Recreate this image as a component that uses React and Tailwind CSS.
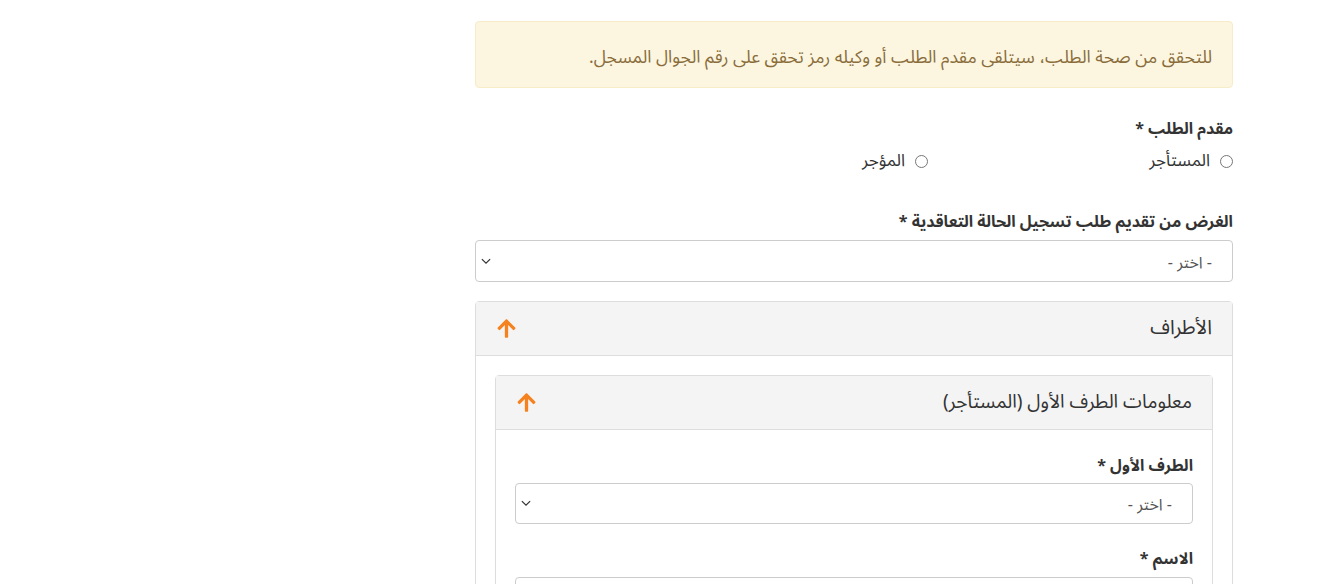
import React from "react";

function ArrowUp() {
  return (
    <svg width="21" height="21" viewBox="0 0 448 512" className="fill-[#f5821f]">
      <path d="M34.9 289.5l-22.2-22.2c-9.4-9.4-9.4-24.6 0-33.9L207 39c9.4-9.4 24.6-9.4 33.9 0l194.3 194.3c9.4 9.4 9.4 24.6 0 33.9L413 289.4c-9.5 9.5-25 9.3-34.3-.4L264 168.6V456c0 13.3-10.7 24-24 24h-32c-13.3 0-24-10.7-24-24V168.6L69.2 289.1c-9.3 9.8-24.8 10-34.3.4z" />
    </svg>
  );
}

function Chevron() {
  return (
    <svg width="12" height="12" viewBox="0 0 16 16" fill="none" stroke="#333" strokeWidth="1.6">
      <path d="M2.5 5.5 L8 11 L13.5 5.5" />
    </svg>
  );
}

function Select({ h = "h-[42px]" }) {
  return (
    <div className={`flex items-center justify-between ${h} rounded border border-[#cccccc] bg-white pr-5 pl-1`}>
      <span className="text-[16px] text-[#555] pt-1">- اختر -</span>
      <Chevron />
    </div>
  );
}

function Radio({ label }) {
  return (
    <div className="flex items-center gap-2.5">
      <span className="w-[13px] h-[13px] rounded-full border border-[#767676] bg-white" />
      <span className="text-[17px] text-[#333]">{label}</span>
    </div>
  );
}

export default function App() {
  return (
    <div
      dir="rtl"
      className="min-h-[584px] bg-white"
      style={{ fontFamily: '"Noto Sans Arabic", "DejaVu Sans", sans-serif' }}
    >
      <div className="mr-[90px] w-[758px] pt-[21px]">
        <div className="rounded border border-[#f7ecc8] bg-[#fcf6e1] px-5 pt-[8px] h-[67px] flex items-center">
          <p className="text-[17.5px] text-[#8a6d3b]">
            للتحقق من صحة الطلب، سيتلقى مقدم الطلب أو وكيله رمز تحقق على رقم الجوال المسجل.
          </p>
        </div>

        <div className="mt-[30px]">
          <div className="text-[16px] font-bold text-[#333] leading-[22px]">مقدم الطلب *</div>
          <div className="flex mt-[9px]">
            <div className="w-[305px]"><Radio label="المستأجر" /></div>
            <div><Radio label="المؤجر" /></div>
          </div>
        </div>

        <div className="mt-[36px]">
          <div className="text-[16px] font-bold text-[#333] leading-[22px] mb-[7px]">الغرض من تقديم طلب تسجيل الحالة التعاقدية *</div>
          <Select />
        </div>

        <div className="mt-[19px] rounded border border-[#dddddd]">
          <div className="h-[54px] bg-[#f4f4f4] border-b border-[#dddddd] flex items-center justify-between px-5">
            <span className="text-[20px] text-[#333]">الأطراف</span>
            <ArrowUp />
          </div>
          <div className="p-[19px]">
            <div className="rounded border border-[#dddddd]">
              <div className="h-[54px] bg-[#f4f4f4] border-b border-[#dddddd] flex items-center justify-between px-5">
                <span className="text-[19px] text-[#333]">معلومات الطرف الأول (المستأجر)</span>
                <ArrowUp />
              </div>
              <div className="px-[19px] pt-[25px] pb-5">
                <div className="text-[16px] font-bold text-[#333] leading-[22px] mb-[6px]">الطرف الأول *</div>
                <Select h="h-[41px]" />
                <div className="mt-[24px] text-[16px] font-bold text-[#333] leading-[22px] mb-[7px]">الاسم *</div>
                <div className="h-[41px] rounded border border-[#cccccc] bg-white" />
              </div>
            </div>
          </div>
        </div>
      </div>
    </div>
  );
}
